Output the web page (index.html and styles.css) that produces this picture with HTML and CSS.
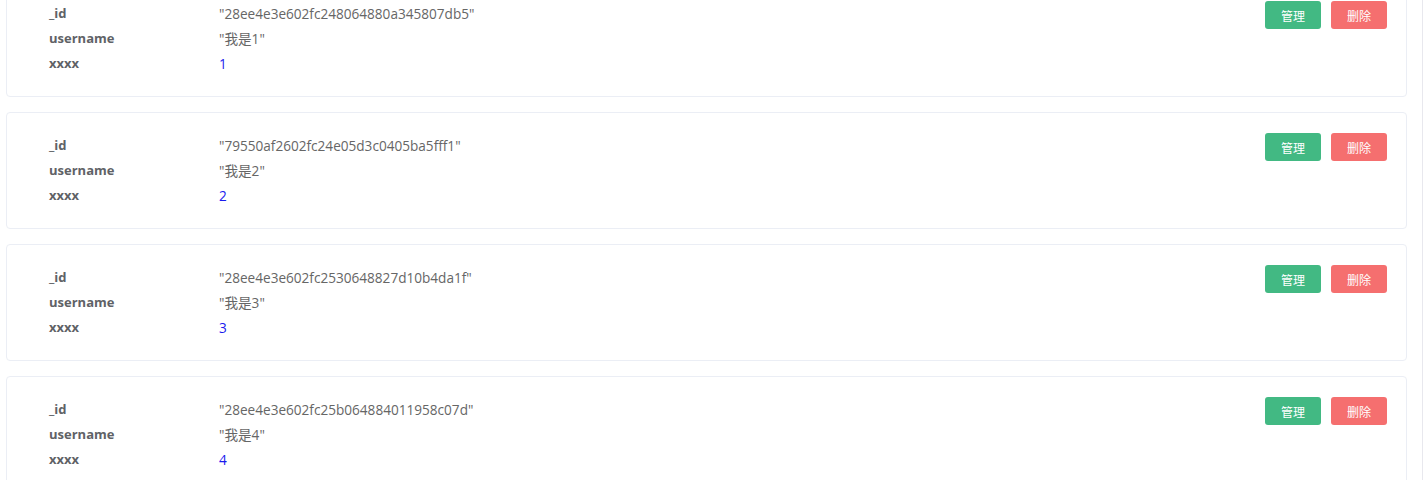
FILE: index.html
```html
<!DOCTYPE html>
<html lang="zh">
<head>
    <meta charset="UTF-8">
    <title>数据列表</title>
    <link rel="stylesheet" href="styles.css">
</head>
<body>
    <div class="page">
        <div class="list">
            <div class="card">
                <div class="fields">
                    <div class="row"><span class="key">_id</span><span class="str">"28ee4e3e602fc248064880a345807db5"</span></div>
                    <div class="row"><span class="key">username</span><span class="str">"我是1"</span></div>
                    <div class="row"><span class="key">xxxx</span><span class="num">1</span></div>
                </div>
                <div class="actions">
                    <button class="btn btn-edit">管理</button>
                    <button class="btn btn-del">删除</button>
                </div>
            </div>
            <div class="card">
                <div class="fields">
                    <div class="row"><span class="key">_id</span><span class="str">"79550af2602fc24e05d3c0405ba5fff1"</span></div>
                    <div class="row"><span class="key">username</span><span class="str">"我是2"</span></div>
                    <div class="row"><span class="key">xxxx</span><span class="num">2</span></div>
                </div>
                <div class="actions">
                    <button class="btn btn-edit">管理</button>
                    <button class="btn btn-del">删除</button>
                </div>
            </div>
            <div class="card">
                <div class="fields">
                    <div class="row"><span class="key">_id</span><span class="str">"28ee4e3e602fc2530648827d10b4da1f"</span></div>
                    <div class="row"><span class="key">username</span><span class="str">"我是3"</span></div>
                    <div class="row"><span class="key">xxxx</span><span class="num">3</span></div>
                </div>
                <div class="actions">
                    <button class="btn btn-edit">管理</button>
                    <button class="btn btn-del">删除</button>
                </div>
            </div>
            <div class="card">
                <div class="fields">
                    <div class="row"><span class="key">_id</span><span class="str">"28ee4e3e602fc25b064884011958c07d"</span></div>
                    <div class="row"><span class="key">username</span><span class="str">"我是4"</span></div>
                    <div class="row"><span class="key">xxxx</span><span class="num">4</span></div>
                </div>
                <div class="actions">
                    <button class="btn btn-edit">管理</button>
                    <button class="btn btn-del">删除</button>
                </div>
            </div>
        </div>
    </div>
</body>
</html>
```

FILE: styles.css
```css
html, body {
    margin: 0;
    padding: 0;
    background-color: #fff;
    overflow: hidden;
}
body {
    font-family: "Open Sans", "Noto Sans CJK SC", sans-serif;
    font-size: 13px;
    color: #606266;
}
.page {
    width: 1422px;
    height: 480px;
    border-right: 1px solid #e8e8ee;
    overflow: hidden;
}
.list {
    margin-top: -20px;
    padding: 0 15px 0 6px;
    display: flex;
    flex-direction: column;
    gap: 15px;
}
.card {
    display: flex;
    justify-content: space-between;
    align-items: flex-start;
    padding: 20px 19px 20px 42px;
    border: 1px solid #ebeef5;
    border-radius: 4px;
    background-color: #fff;
}
.row {
    display: flex;
    height: 25px;
    line-height: 25px;
}
.key {
    width: 170px;
    font-weight: bold;
    color: #606266;
}
.str {
    font-size: 13.6px;
    color: #666;
}
.num {
    font-size: 13.6px;
    color: #1a1aee;
}
.actions {
    display: flex;
    gap: 10px;
}
.btn {
    width: 56px;
    height: 28px;
    border: none;
    border-radius: 3px;
    color: #fff;
    font-family: "Noto Sans CJK SC", sans-serif;
    font-size: 12px;
    padding: 0;
    cursor: pointer;
}
.btn-edit {
    background-color: #42b983;
}
.btn-del {
    background-color: #f56f6f;
}
```
